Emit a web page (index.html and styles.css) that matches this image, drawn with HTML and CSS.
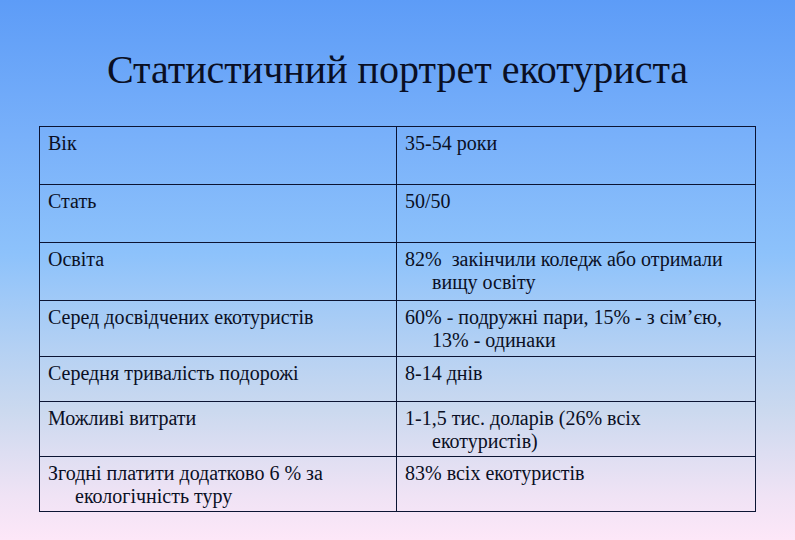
FILE: index.html
```html
<!DOCTYPE html>
<html lang="en">
<head>
<meta charset="utf-8">
<title>Slide</title>
<link rel="stylesheet" href="styles.css">
</head>
<body>
<div class="slide">
  <h1 class="title">Статистичний портрет екотуриста</h1>
  <table class="stats">
    <tr class="row-1"><td class="key"><p class="txt">Вік</p></td><td class="val"><p class="txt">35-54 роки</p></td></tr>
    <tr class="row-2"><td class="key"><p class="txt">Стать</p></td><td class="val"><p class="txt">50/50</p></td></tr>
    <tr class="row-3"><td class="key"><p class="txt">Освіта</p></td><td class="val"><p class="txt">82%&nbsp; закінчили коледж або отримали<br>вищу освіту</p></td></tr>
    <tr class="row-4"><td class="key"><p class="txt">Серед досвідчених екотуристів</p></td><td class="val"><p class="txt">60% - подружні пари, 15% - з сім’єю,<br>13% - одинаки</p></td></tr>
    <tr class="row-5"><td class="key"><p class="txt">Середня тривалість подорожі</p></td><td class="val"><p class="txt">8-14 днів</p></td></tr>
    <tr class="row-6"><td class="key"><p class="txt">Можливі витрати</p></td><td class="val"><p class="txt">1-1,5 тис. доларів (26% всіх<br>екотуристів)</p></td></tr>
    <tr class="row-7"><td class="key"><p class="txt">Згодні платити додатково 6 % за<br>екологічність туру</p></td><td class="val"><p class="txt">83% всіх екотуристів</p></td></tr>
  </table>
</div>
</body>
</html>
```
FILE: styles.css
```css
body {
  margin: 0;
  padding: 0;
  color: #0a0f24;
}
.slide {
  width: 795px;
  height: 540px;
  box-sizing: border-box;
  padding-top: 46px;
  background: linear-gradient(180deg, #5d9cf7 0%, #78b0fa 25%, #8dc2fb 47%, #b5d1f3 65%, #cbd9ef 76%, #f0e3f5 92%, #fde7f8 100%);
}
.title {
  font-family: "Liberation Serif", "Noto Serif", FreeSerif, serif;
  margin: 0;
  height: 80px;
  text-align: center;
  font-weight: normal;
  font-size: 40px;
  color: #0a0f24;
}
.stats {
  margin-left: 39px;
  width: 717px;
  border-collapse: collapse;
  table-layout: fixed;
}
.stats td {
  border: 1.5px solid #0b1433;
  vertical-align: top;
  padding: 5px 8px 0 8px;
}
.stats td.key {
  width: 340px;
}
.txt {
  font-family: "Liberation Serif", "Noto Serif", FreeSerif, serif;
  font-size: 20px;
  margin: 0;
  padding-left: 27px;
  text-indent: -27px;
  color: #0a0f24;
}
.row-1, .row-2, .row-3 { height: 58px; }
.row-4 { height: 56px; }
.row-5 { height: 45px; }
.row-6, .row-7 { height: 55px; }
```
